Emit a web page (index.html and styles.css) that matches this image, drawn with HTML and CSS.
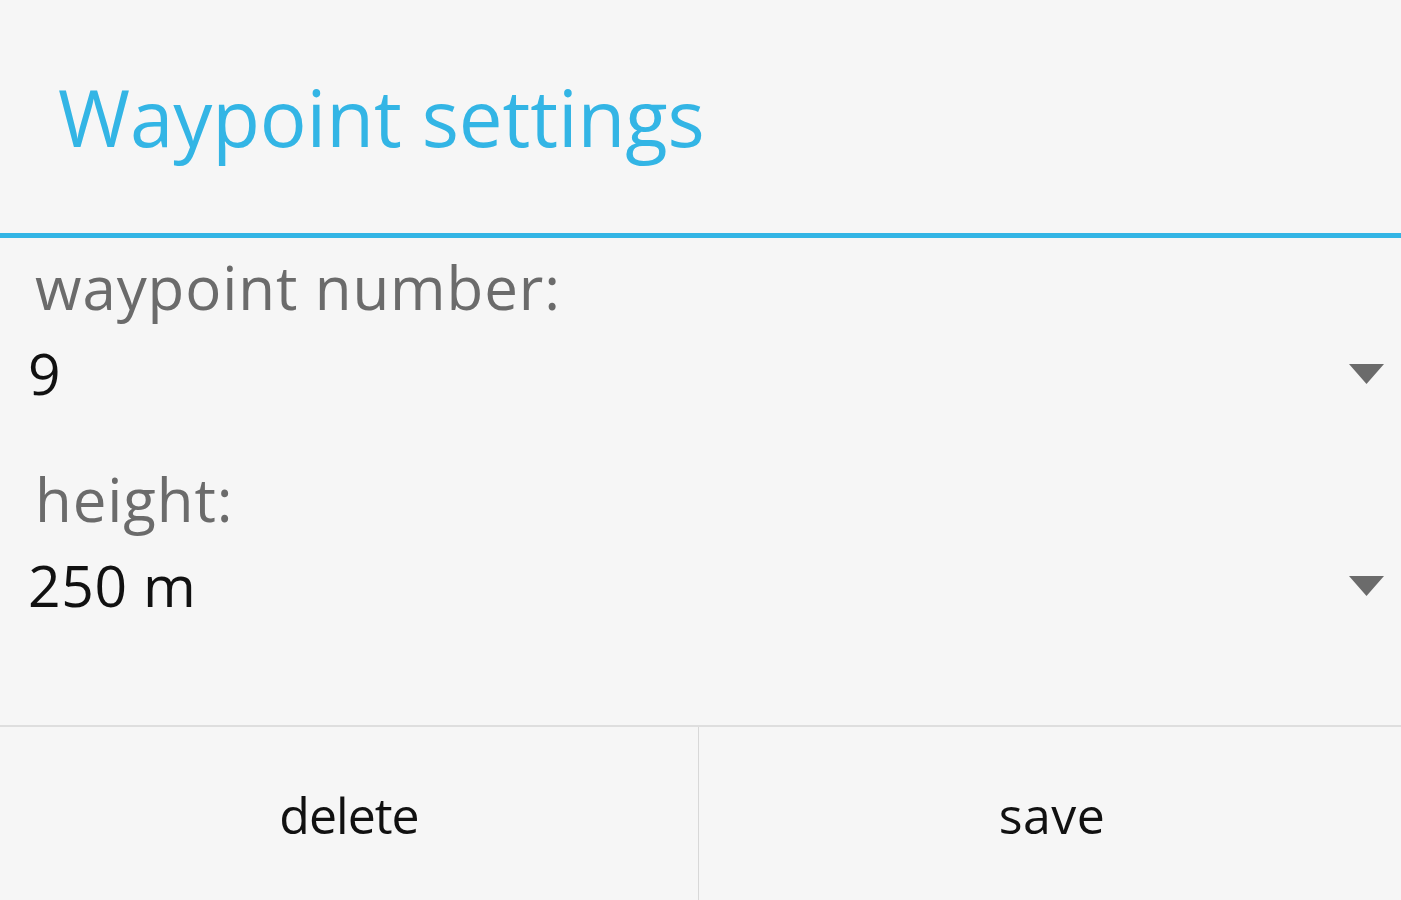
FILE: index.html
```html
<!DOCTYPE html>
<html lang="en">
<head>
<meta charset="utf-8">
<title>Waypoint settings</title>
<link rel="stylesheet" href="styles.css">
</head>
<body>
<div class="dialog">
  <header class="header">
    <h1 class="title">Waypoint settings</h1>
  </header>
  <div class="divider"></div>
  <main class="content">
    <div class="field">
      <div class="label">waypoint number:</div>
      <div class="spinner">
        <span class="value">9</span>
        <svg class="arrow" width="35" height="20" viewBox="0 0 35 20"><polygon points="0,0 35,0 17.5,20" fill="#6b6b6b"/></svg>
      </div>
    </div>
    <div class="field field-second">
      <div class="label">height:</div>
      <div class="spinner">
        <span class="value">250 m</span>
        <svg class="arrow" width="35" height="20" viewBox="0 0 35 20"><polygon points="0,0 35,0 17.5,20" fill="#6b6b6b"/></svg>
      </div>
    </div>
  </main>
  <footer class="buttons">
    <button class="btn btn-left">delete</button>
    <button class="btn btn-right">save</button>
  </footer>
</div>
</body>
</html>
```
FILE: styles.css
```css
html, body {
  margin: 0;
  padding: 0;
  height: 100%;
  background: #f6f6f6;
  overflow: hidden;
}

.dialog {
  display: flex;
  flex-direction: column;
  height: 900px;
  font-family: "Open Sans", "Noto Sans", sans-serif;
}

.header {
  height: 233px;
  box-sizing: border-box;
  padding: 78px 0 0 58px;
}

.title {
  margin: 0;
  font-size: 78px;
  line-height: 78px;
  font-weight: 400;
  letter-spacing: -0.1px;
  color: #33b5e5;
}

.divider {
  height: 5px;
  background: #33b5e5;
}

.content {
  flex: 1;
  padding-top: 19px;
}

.field-second {
  margin-top: 67px;
}

.label {
  font-size: 60px;
  line-height: 60px;
  letter-spacing: 0.9px;
  color: #6b6b6b;
  padding-left: 35px;
}

.spinner {
  display: flex;
  align-items: center;
  justify-content: space-between;
  margin-top: 28px;
  padding: 0 17px 0 28px;
}

.value {
  font-size: 57px;
  line-height: 57px;
  letter-spacing: 0.6px;
  color: #111111;
}

.arrow {
  display: block;
}

.buttons {
  display: flex;
  height: 173px;
  border-top: 2px solid #dedede;
}

.btn {
  flex: 1;
  margin: 0;
  border: 0;
  background: transparent;
  font-family: inherit;
  font-size: 50px;
  line-height: 50px;
  color: #111111;
  padding: 63px 0 0 0;
  align-self: stretch;
  display: flex;
  justify-content: center;
  align-items: flex-start;
}

.btn-left {
  letter-spacing: -1px;
}

.btn-right {
  border-left: 1px solid #d8d8d8;
  padding-left: 4px;
  letter-spacing: 0.5px;
}
```
